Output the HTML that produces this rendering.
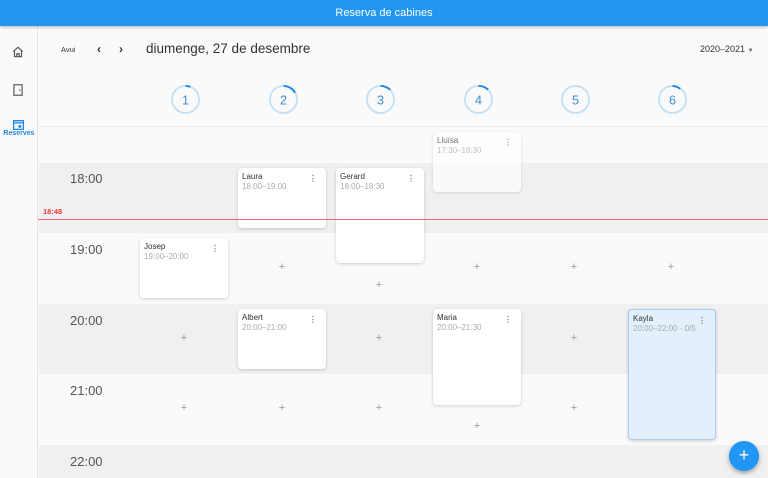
<!DOCTYPE html>
<html><head><meta charset="utf-8"><style>
*{margin:0;padding:0;box-sizing:border-box}
body{width:768px;height:478px;overflow:hidden;background:#fafafa;font-family:"Liberation Sans",sans-serif;position:relative}
.a{position:absolute}
.top{left:0;top:0;width:768px;height:26px;background:#2196f3;color:#fff;font-size:11px;text-align:center;line-height:26px;box-shadow:0 1px 3px rgba(0,0,0,.3);z-index:5}
.side{left:0;top:26px;width:38px;height:452px;background:#fafafa;border-right:1px solid #e4e4e4;z-index:4}
.band{left:39px;width:729px}
.g{background:#f0f0f0}
.t{left:70px;font-size:13px;color:#555}
.card{background:#fff;border-radius:4px;box-shadow:0 1px 3px rgba(0,0,0,.18);width:88px;padding:4px 4px;font-size:8px;color:#333;line-height:9.5px}
.card span{color:#aaa;display:block}
.card i{position:absolute;right:9px;top:6px;font-style:normal;color:#777;font-size:8px;font-weight:bold}
.p{font-size:11px;color:#999;width:12px;text-align:center;margin-left:-6px;margin-top:-7px}
.c{width:31px;height:31px;margin-left:-15px;margin-top:-15px}
</style></head><body>
<div class="a top">Reserva de cabines</div>
<div class="a side">
<svg class="a" style="left:11px;top:19px" width="14" height="14" viewBox="0 0 24 24"><path d="M4 11L12 4l8 7M6 9.5V20h12V9.5M10 20v-5h4v5" fill="none" stroke="#555" stroke-width="2"/></svg>
<svg class="a" style="left:11px;top:57px" width="14" height="14" viewBox="0 0 24 24"><rect x="5" y="3" width="14" height="18" fill="none" stroke="#555" stroke-width="2"/><circle cx="15" cy="12" r="1.3" fill="#555"/></svg>
<svg class="a" style="left:12px;top:92px" width="13" height="13" viewBox="0 0 24 24"><path d="M3 5h18v16H3z M3 9h18" fill="none" stroke="#1e88e5" stroke-width="2.5"/><rect x="12" y="13" width="5" height="5" fill="#1e88e5"/></svg>
<div class="a" style="left:0;top:104px;width:38px;text-align:center;font-size:7px;color:#1e88e5;font-weight:bold">Reserves</div>
</div>
<div class="a" style="left:61px;top:45px;font-size:7.5px;color:#333">Avui</div>
<div class="a" style="left:97px;top:42px;font-size:12px;color:#333;font-weight:bold">&#8249;</div>
<div class="a" style="left:119px;top:42px;font-size:12px;color:#333;font-weight:bold">&#8250;</div>
<div class="a" style="left:146px;top:41px;font-size:13.5px;color:#333">diumenge, 27 de desembre</div>
<div class="a" style="left:700px;top:44px;font-size:9px;color:#333">2020–2021 <span style="font-size:6px;color:#666">▼</span></div>
<div class="a band" style="top:126px;height:1px;background:#ececec"></div>
<div class="a band g" style="top:163px;height:70px"></div>
<div class="a band g" style="top:304px;height:70px"></div>
<div class="a band g" style="top:445px;height:33px"></div>
<div class="a t" style="top:171px">18:00</div>
<div class="a t" style="top:242px">19:00</div>
<div class="a t" style="top:313px">20:00</div>
<div class="a t" style="top:383px">21:00</div>
<div class="a t" style="top:454px">22:00</div>

<svg class="a c" style="left:185px;top:99px" viewBox="0 0 32 32"><circle cx="16" cy="16" r="14" fill="none" stroke="#c5e0f5" stroke-width="2"/><path d="M16 2A14 14 0 0 1 21 3" fill="none" stroke="#1e88e5" stroke-width="2"/><text x="16" y="21" text-anchor="middle" font-size="13" fill="#3b8fd6" font-family="Liberation Sans">1</text></svg>
<svg class="a c" style="left:283px;top:99px" viewBox="0 0 32 32"><circle cx="16" cy="16" r="14" fill="none" stroke="#c5e0f5" stroke-width="2"/><path d="M16 2A14 14 0 0 1 28 9" fill="none" stroke="#1e88e5" stroke-width="2"/><text x="16" y="21" text-anchor="middle" font-size="13" fill="#3b8fd6" font-family="Liberation Sans">2</text></svg>
<svg class="a c" style="left:380px;top:99px" viewBox="0 0 32 32"><circle cx="16" cy="16" r="14" fill="none" stroke="#c5e0f5" stroke-width="2"/><path d="M16 2A14 14 0 0 1 26 6" fill="none" stroke="#1e88e5" stroke-width="2"/><text x="16" y="21" text-anchor="middle" font-size="13" fill="#3b8fd6" font-family="Liberation Sans">3</text></svg>
<svg class="a c" style="left:478px;top:99px" viewBox="0 0 32 32"><circle cx="16" cy="16" r="14" fill="none" stroke="#c5e0f5" stroke-width="2"/><path d="M16 2A14 14 0 0 1 26 6" fill="none" stroke="#1e88e5" stroke-width="2"/><text x="16" y="21" text-anchor="middle" font-size="13" fill="#3b8fd6" font-family="Liberation Sans">4</text></svg>
<svg class="a c" style="left:575px;top:99px" viewBox="0 0 32 32"><circle cx="16" cy="16" r="14" fill="none" stroke="#c5e0f5" stroke-width="2"/><text x="16" y="21" text-anchor="middle" font-size="13" fill="#3b8fd6" font-family="Liberation Sans">5</text></svg>
<svg class="a c" style="left:672px;top:99px" viewBox="0 0 32 32"><circle cx="16" cy="16" r="14" fill="none" stroke="#c5e0f5" stroke-width="2"/><path d="M16 2A14 14 0 0 1 24 5" fill="none" stroke="#1e88e5" stroke-width="2"/><text x="16" y="21" text-anchor="middle" font-size="13" fill="#3b8fd6" font-family="Liberation Sans">6</text></svg>

<div class="a card" style="left:433px;top:132px;height:60px;opacity:.7">Lluïsa<span>17:30–18:30</span><i>⋮</i></div>
<div class="a card" style="left:238px;top:168px;height:60px">Laura<span>18:00–19:00</span><i>⋮</i></div>
<div class="a card" style="left:336px;top:168px;height:95px">Gerard<span>18:00–18:30</span><i>⋮</i></div>
<div class="a card" style="left:140px;top:238px;height:60px">Josep<span>19:00–20:00</span><i>⋮</i></div>
<div class="a card" style="left:238px;top:309px;height:60px">Albert<span>20:00–21:00</span><i>⋮</i></div>
<div class="a card" style="left:433px;top:309px;height:96px">Maria<span>20:00–21:30</span><i>⋮</i></div>
<div class="a card" style="left:628px;top:309px;height:131px;background:#e3f0fc;border:1px solid #a9d0f3">Kayla<span>20:00–22:00 · 0/5</span><i>⋮</i></div>

<div class="a" style="left:38px;top:219px;width:730px;height:1px;background:#ef6c6c;z-index:3"></div>
<div class="a" style="left:43px;top:207px;font-size:7.5px;color:#e53935;font-weight:bold">18:48</div>

<div class="a p" style="left:282px;top:268px">+</div>
<div class="a p" style="left:477px;top:268px">+</div>
<div class="a p" style="left:574px;top:268px">+</div>
<div class="a p" style="left:671px;top:268px">+</div>
<div class="a p" style="left:379px;top:286px">+</div>
<div class="a p" style="left:184px;top:339px">+</div>
<div class="a p" style="left:379px;top:339px">+</div>
<div class="a p" style="left:574px;top:339px">+</div>
<div class="a p" style="left:184px;top:409px">+</div>
<div class="a p" style="left:282px;top:409px">+</div>
<div class="a p" style="left:379px;top:409px">+</div>
<div class="a p" style="left:574px;top:409px">+</div>
<div class="a p" style="left:477px;top:427px">+</div>

<div class="a" style="left:729px;top:441px;width:30px;height:30px;border-radius:50%;background:#2196f3;box-shadow:0 2px 5px rgba(0,0,0,.35);color:#fff;text-align:center;line-height:29px;font-size:18px">+</div>
</body></html>
